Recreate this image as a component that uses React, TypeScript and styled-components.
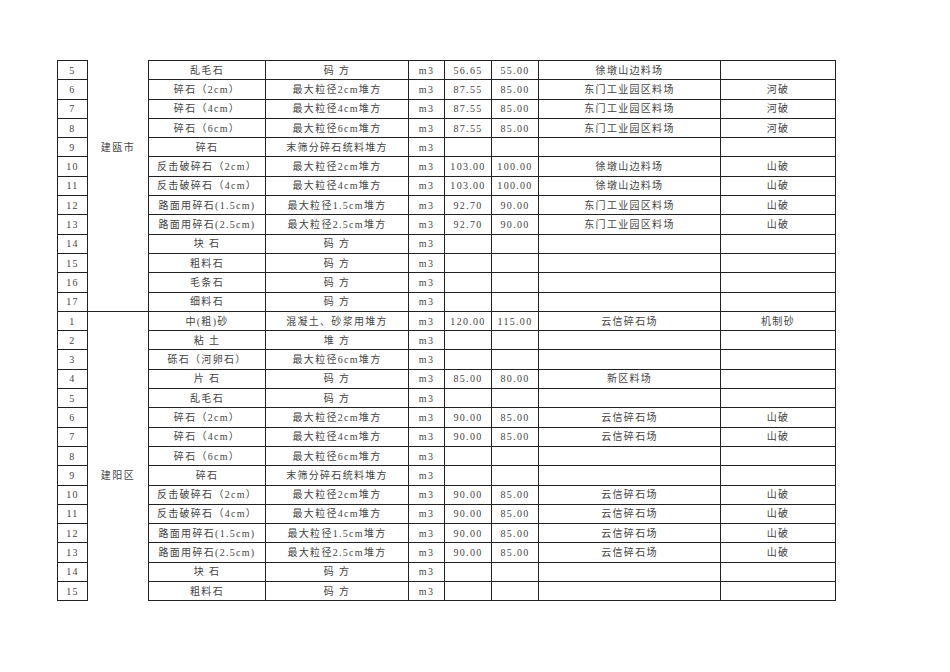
import React from 'react';
import styled, { createGlobalStyle } from 'styled-components';

const GlobalStyle = createGlobalStyle`
    body {
        margin: 0;
        background: #fff;
    }
`;

const Page = styled.div`
    padding: 60px 0 0 57px;
`;

const PriceTable = styled.table`
    border-collapse: collapse;
    table-layout: fixed;
    width: 778px;
    font-family: 'Liberation Serif', 'Noto Sans CJK SC', serif;
    font-size: 10px;
    color: #444;
`;

const Row = styled.tr`
    height: 19.3px;
`;

const Cell = styled.td`
    border: 1px solid #222;
    padding: 0;
    text-align: center;
    vertical-align: middle;
    letter-spacing: 1.3px;
    white-space: nowrap;
    overflow: hidden;
    line-height: 17px;
`;

const CityCell = styled.td<{ $first: boolean }>`
    border-top: ${(p) => (p.$first ? '1px solid #222' : 'none')};
    border-bottom: none;
    padding: 0;
    text-align: center;
    vertical-align: middle;
    letter-spacing: 1.5px;
    white-space: nowrap;
    line-height: 17px;
`;

interface Item {
    no: number;
    name: string;
    spec: string;
    unit: string;
    price1?: string;
    price2?: string;
    source?: string;
    note?: string;
}

interface Block {
    city: string;
    cityAt: number;
    items: Item[];
}

const blocks: Block[] = [
    {
        city: '建瓯市',
        cityAt: 9,
        items: [
            { no: 5, name: '乱毛石', spec: '码 方', unit: 'm3', price1: '56.65', price2: '55.00', source: '徐墩山边料场' },
            { no: 6, name: '碎石（2cm）', spec: '最大粒径2cm堆方', unit: 'm3', price1: '87.55', price2: '85.00', source: '东门工业园区料场', note: '河破' },
            { no: 7, name: '碎石（4cm）', spec: '最大粒径4cm堆方', unit: 'm3', price1: '87.55', price2: '85.00', source: '东门工业园区料场', note: '河破' },
            { no: 8, name: '碎石（6cm）', spec: '最大粒径6cm堆方', unit: 'm3', price1: '87.55', price2: '85.00', source: '东门工业园区料场', note: '河破' },
            { no: 9, name: '碎石', spec: '末筛分碎石统料堆方', unit: 'm3' },
            { no: 10, name: '反击破碎石（2cm）', spec: '最大粒径2cm堆方', unit: 'm3', price1: '103.00', price2: '100.00', source: '徐墩山边料场', note: '山破' },
            { no: 11, name: '反击破碎石（4cm）', spec: '最大粒径4cm堆方', unit: 'm3', price1: '103.00', price2: '100.00', source: '徐墩山边料场', note: '山破' },
            { no: 12, name: '路面用碎石(1.5cm)', spec: '最大粒径1.5cm堆方', unit: 'm3', price1: '92.70', price2: '90.00', source: '东门工业园区料场', note: '山破' },
            { no: 13, name: '路面用碎石(2.5cm)', spec: '最大粒径2.5cm堆方', unit: 'm3', price1: '92.70', price2: '90.00', source: '东门工业园区料场', note: '山破' },
            { no: 14, name: '块 石', spec: '码 方', unit: 'm3' },
            { no: 15, name: '粗料石', spec: '码 方', unit: 'm3' },
            { no: 16, name: '毛条石', spec: '码 方', unit: 'm3' },
            { no: 17, name: '细料石', spec: '码 方', unit: 'm3' },
        ],
    },
    {
        city: '建阳区',
        cityAt: 9,
        items: [
            { no: 1, name: '中(粗)砂', spec: '混凝土、砂浆用堆方', unit: 'm3', price1: '120.00', price2: '115.00', source: '云信碎石场', note: '机制砂' },
            { no: 2, name: '粘 土', spec: '堆 方', unit: 'm3' },
            { no: 3, name: '砾石（河卵石）', spec: '最大粒径6cm堆方', unit: 'm3' },
            { no: 4, name: '片 石', spec: '码 方', unit: 'm3', price1: '85.00', price2: '80.00', source: '新区料场' },
            { no: 5, name: '乱毛石', spec: '码 方', unit: 'm3' },
            { no: 6, name: '碎石（2cm）', spec: '最大粒径2cm堆方', unit: 'm3', price1: '90.00', price2: '85.00', source: '云信碎石场', note: '山破' },
            { no: 7, name: '碎石（4cm）', spec: '最大粒径4cm堆方', unit: 'm3', price1: '90.00', price2: '85.00', source: '云信碎石场', note: '山破' },
            { no: 8, name: '碎石（6cm）', spec: '最大粒径6cm堆方', unit: 'm3' },
            { no: 9, name: '碎石', spec: '末筛分碎石统料堆方', unit: 'm3' },
            { no: 10, name: '反击破碎石（2cm）', spec: '最大粒径2cm堆方', unit: 'm3', price1: '90.00', price2: '85.00', source: '云信碎石场', note: '山破' },
            { no: 11, name: '反击破碎石（4cm）', spec: '最大粒径4cm堆方', unit: 'm3', price1: '90.00', price2: '85.00', source: '云信碎石场', note: '山破' },
            { no: 12, name: '路面用碎石(1.5cm)', spec: '最大粒径1.5cm堆方', unit: 'm3', price1: '90.00', price2: '85.00', source: '云信碎石场', note: '山破' },
            { no: 13, name: '路面用碎石(2.5cm)', spec: '最大粒径2.5cm堆方', unit: 'm3', price1: '90.00', price2: '85.00', source: '云信碎石场', note: '山破' },
            { no: 14, name: '块 石', spec: '码 方', unit: 'm3' },
            { no: 15, name: '粗料石', spec: '码 方', unit: 'm3' },
        ],
    },
];

const colWidths = [30, 61, 117, 143, 36, 47, 47, 182, 115];

export default function App() {
    return (
        <Page>
            <GlobalStyle />
            <PriceTable>
                <colgroup>
                    {colWidths.map((w, i) => (
                        <col key={i} style={{ width: w }} />
                    ))}
                </colgroup>
                <tbody>
                    {blocks.map((block, bi) =>
                        block.items.map((item, ii) => (
                            <Row key={`${bi}-${ii}`}>
                                <Cell>{item.no}</Cell>
                                <CityCell $first={bi > 0 && ii === 0}>
                                    {item.no === block.cityAt ? block.city : ''}
                                </CityCell>
                                <Cell>{item.name}</Cell>
                                <Cell>{item.spec}</Cell>
                                <Cell>{item.unit}</Cell>
                                <Cell>{item.price1}</Cell>
                                <Cell>{item.price2}</Cell>
                                <Cell>{item.source}</Cell>
                                <Cell>{item.note}</Cell>
                            </Row>
                        ))
                    )}
                </tbody>
            </PriceTable>
        </Page>
    );
}
